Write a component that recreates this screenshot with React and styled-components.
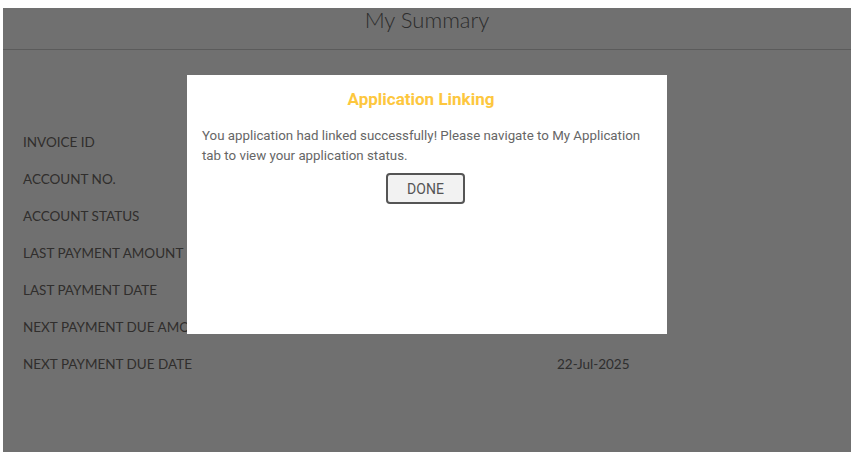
import React from "react";
import styled, { createGlobalStyle } from "styled-components";

const Global = createGlobalStyle`
  html, body { margin: 0; padding: 0; background: #fff; }
  * { box-sizing: border-box; }
`;

const Page = styled.div`
  padding: 8px 7px 6px 3px;
`;

const Card = styled.div`
  position: relative;
  height: 444px;
  background: #fff;
  font-family: Lato, "Liberation Sans", sans-serif;
  overflow: hidden;
`;

const Header = styled.div`
  height: 42px;
  padding-top: 1px;
  border-bottom: 1px solid #cfcfcf;
  display: flex;
  justify-content: center;
  align-items: flex-start;
`;

const Title = styled.h1`
  margin: 0;
  font-weight: 300;
  font-size: 22px;
  line-height: 22px;
  color: #666;
`;

const List = styled.div`
  padding: 83px 0 0 20px;
  display: flex;
  flex-direction: column;
`;

const Row = styled.div`
  display: grid;
  grid-template-columns: 534px 1fr;
  height: 37px;
  align-items: start;
  font-size: 13.5px;
  line-height: 18px;
  color: #6b6b6b;
`;

const Label = styled.span`
  text-transform: uppercase;
  color: #6e6a66;
`;

const Value = styled.span``;

const Overlay = styled.div`
  position: absolute;
  inset: 0;
  background: rgba(0, 0, 0, 0.56);
`;

const Modal = styled.div`
  position: absolute;
  top: 67px;
  left: 184px;
  width: 480px;
  height: 259px;
  background: #fff;
  padding: 14px 15px;
  font-family: Roboto, "Liberation Sans", sans-serif;
  display: flex;
  flex-direction: column;
  align-items: center;
`;

const ModalTitle = styled.h2`
  margin: 0 12px 0 0;
  font-size: 17px;
  line-height: 20px;
  font-weight: 700;
  color: #fdc73e;
`;

const ModalText = styled.p`
  margin: 17px 0 0;
  align-self: stretch;
  font-size: 13.3px;
  line-height: 20px;
  color: #666;
`;

const Button = styled.button`
  margin: 7px 3px 0 0;
  width: 79px;
  height: 31px;
  border: 2px solid #555;
  border-radius: 4px;
  background: #f2f2f2;
  color: #555;
  font-family: Roboto, "Liberation Sans", sans-serif;
  font-size: 14px;
  padding: 0;
  cursor: pointer;
`;

const rows = [
  ["Invoice ID", ""],
  ["Account No.", ""],
  ["Account Status", ""],
  ["Last Payment Amount", ""],
  ["Last Payment Date", ""],
  ["Next Payment Due Amount", ""],
  ["Next Payment Due Date", "22-Jul-2025"],
];

export default function App() {
  return (
    <Page>
      <Global />
      <Card>
        <Header>
          <Title>My Summary</Title>
        </Header>
        <List>
          {rows.map(([l, v]) => (
            <Row key={l}>
              <Label>{l}</Label>
              <Value>{v}</Value>
            </Row>
          ))}
        </List>
        <Overlay />
        <Modal>
          <ModalTitle>Application Linking</ModalTitle>
          <ModalText>
            You application had linked successfully! Please navigate to My
            Application tab to view your application status.
          </ModalText>
          <Button>DONE</Button>
        </Modal>
      </Card>
    </Page>
  );
}
